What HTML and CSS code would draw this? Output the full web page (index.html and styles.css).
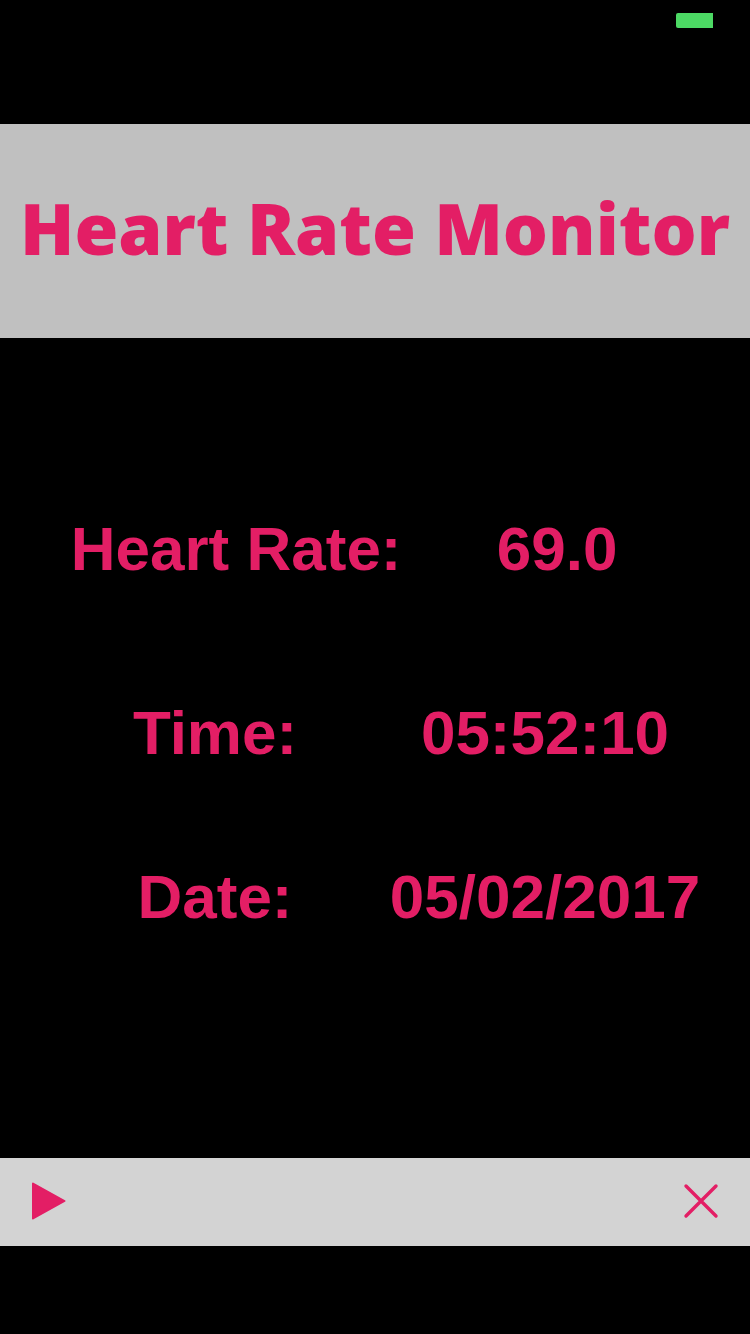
FILE: index.html
```html
<!DOCTYPE html>
<html lang="en">
<head>
<meta charset="utf-8">
<meta name="viewport" content="width=device-width, initial-scale=1">
<title>Heart Rate Monitor</title>
<link rel="stylesheet" href="styles.css">
</head>
<body>
<div class="screen">
  <div class="status-bar"><span class="battery"></span></div>
  <header class="banner"><h1 class="title">Heart Rate Monitor</h1></header>
  <main class="readings">
    <dl class="reading-list">
      <div class="reading reading-rate"><dt>Heart Rate:</dt><dd>69.0</dd></div>
      <div class="reading reading-time"><dt>Time:</dt><dd>05:52:10</dd></div>
      <div class="reading"><dt>Date:</dt><dd>05/02/2017</dd></div>
    </dl>
  </main>
  <footer class="toolbar">
    <button class="tool" type="button" aria-label="Start">
      <svg width="36" height="40" viewBox="0 0 36 40"><path d="M2 2.500 33.500 20 2 37.500Z" fill="currentColor" stroke="currentColor" stroke-width="2" stroke-linejoin="round"/></svg>
    </button>
    <button class="tool" type="button" aria-label="Stop">
      <svg width="36" height="36" viewBox="0 0 36 36"><path d="M3 3 33 33M33 3 3 33" fill="none" stroke="currentColor" stroke-width="3.400" stroke-linecap="round"/></svg>
    </button>
  </footer>
</div>
</body>
</html>
```

FILE: styles.css
```css
* {
  box-sizing: border-box;
}

body {
  margin: 0;
  background: #000;
  color: #e31e65;
  font-family: "Liberation Sans", Arial, sans-serif;
}

.screen {
  display: flex;
  flex-direction: column;
  min-height: 100vh;
  padding-bottom: 88px;
}

.status-bar {
  display: flex;
  justify-content: flex-end;
  height: 124px;
  padding: 13px 37px 0 0;
}

.battery {
  width: 37px;
  height: 15px;
  border-radius: 2px 0 0 2px;
  background: #4cd964;
}

.banner {
  padding: 59px 0 65px;
  background: #c0c0c0;
}

.title {
  margin: 0;
  font-family: "Gill Sans", "Open Sans", sans-serif;
  font-size: 71px;
  font-weight: 800;
  line-height: 90px;
  text-align: center;
  white-space: nowrap;
}

.readings {
  flex: 1;
  padding-top: 175px;
}

.reading-list {
  margin: 0;
  font-size: 62px;
  font-weight: bold;
  line-height: 72px;
  text-align: center;
  white-space: nowrap;
}

.reading {
  display: grid;
  grid-template-columns: 1fr 1fr;
  padding: 0 40px 0 50px;
}

.reading-rate {
  grid-template-columns: 11fr 10fr;
  padding-left: 68px;
  margin-bottom: 112px;
}

.reading-time {
  margin-bottom: 92px;
}

.reading dd {
  margin: 0;
}

.toolbar {
  display: flex;
  align-items: center;
  justify-content: space-between;
  height: 88px;
  padding: 0 31px 2px;
  background: #d3d3d3;
}

.tool {
  display: flex;
  padding: 0;
  border: 0;
  background: none;
  color: inherit;
}
```
